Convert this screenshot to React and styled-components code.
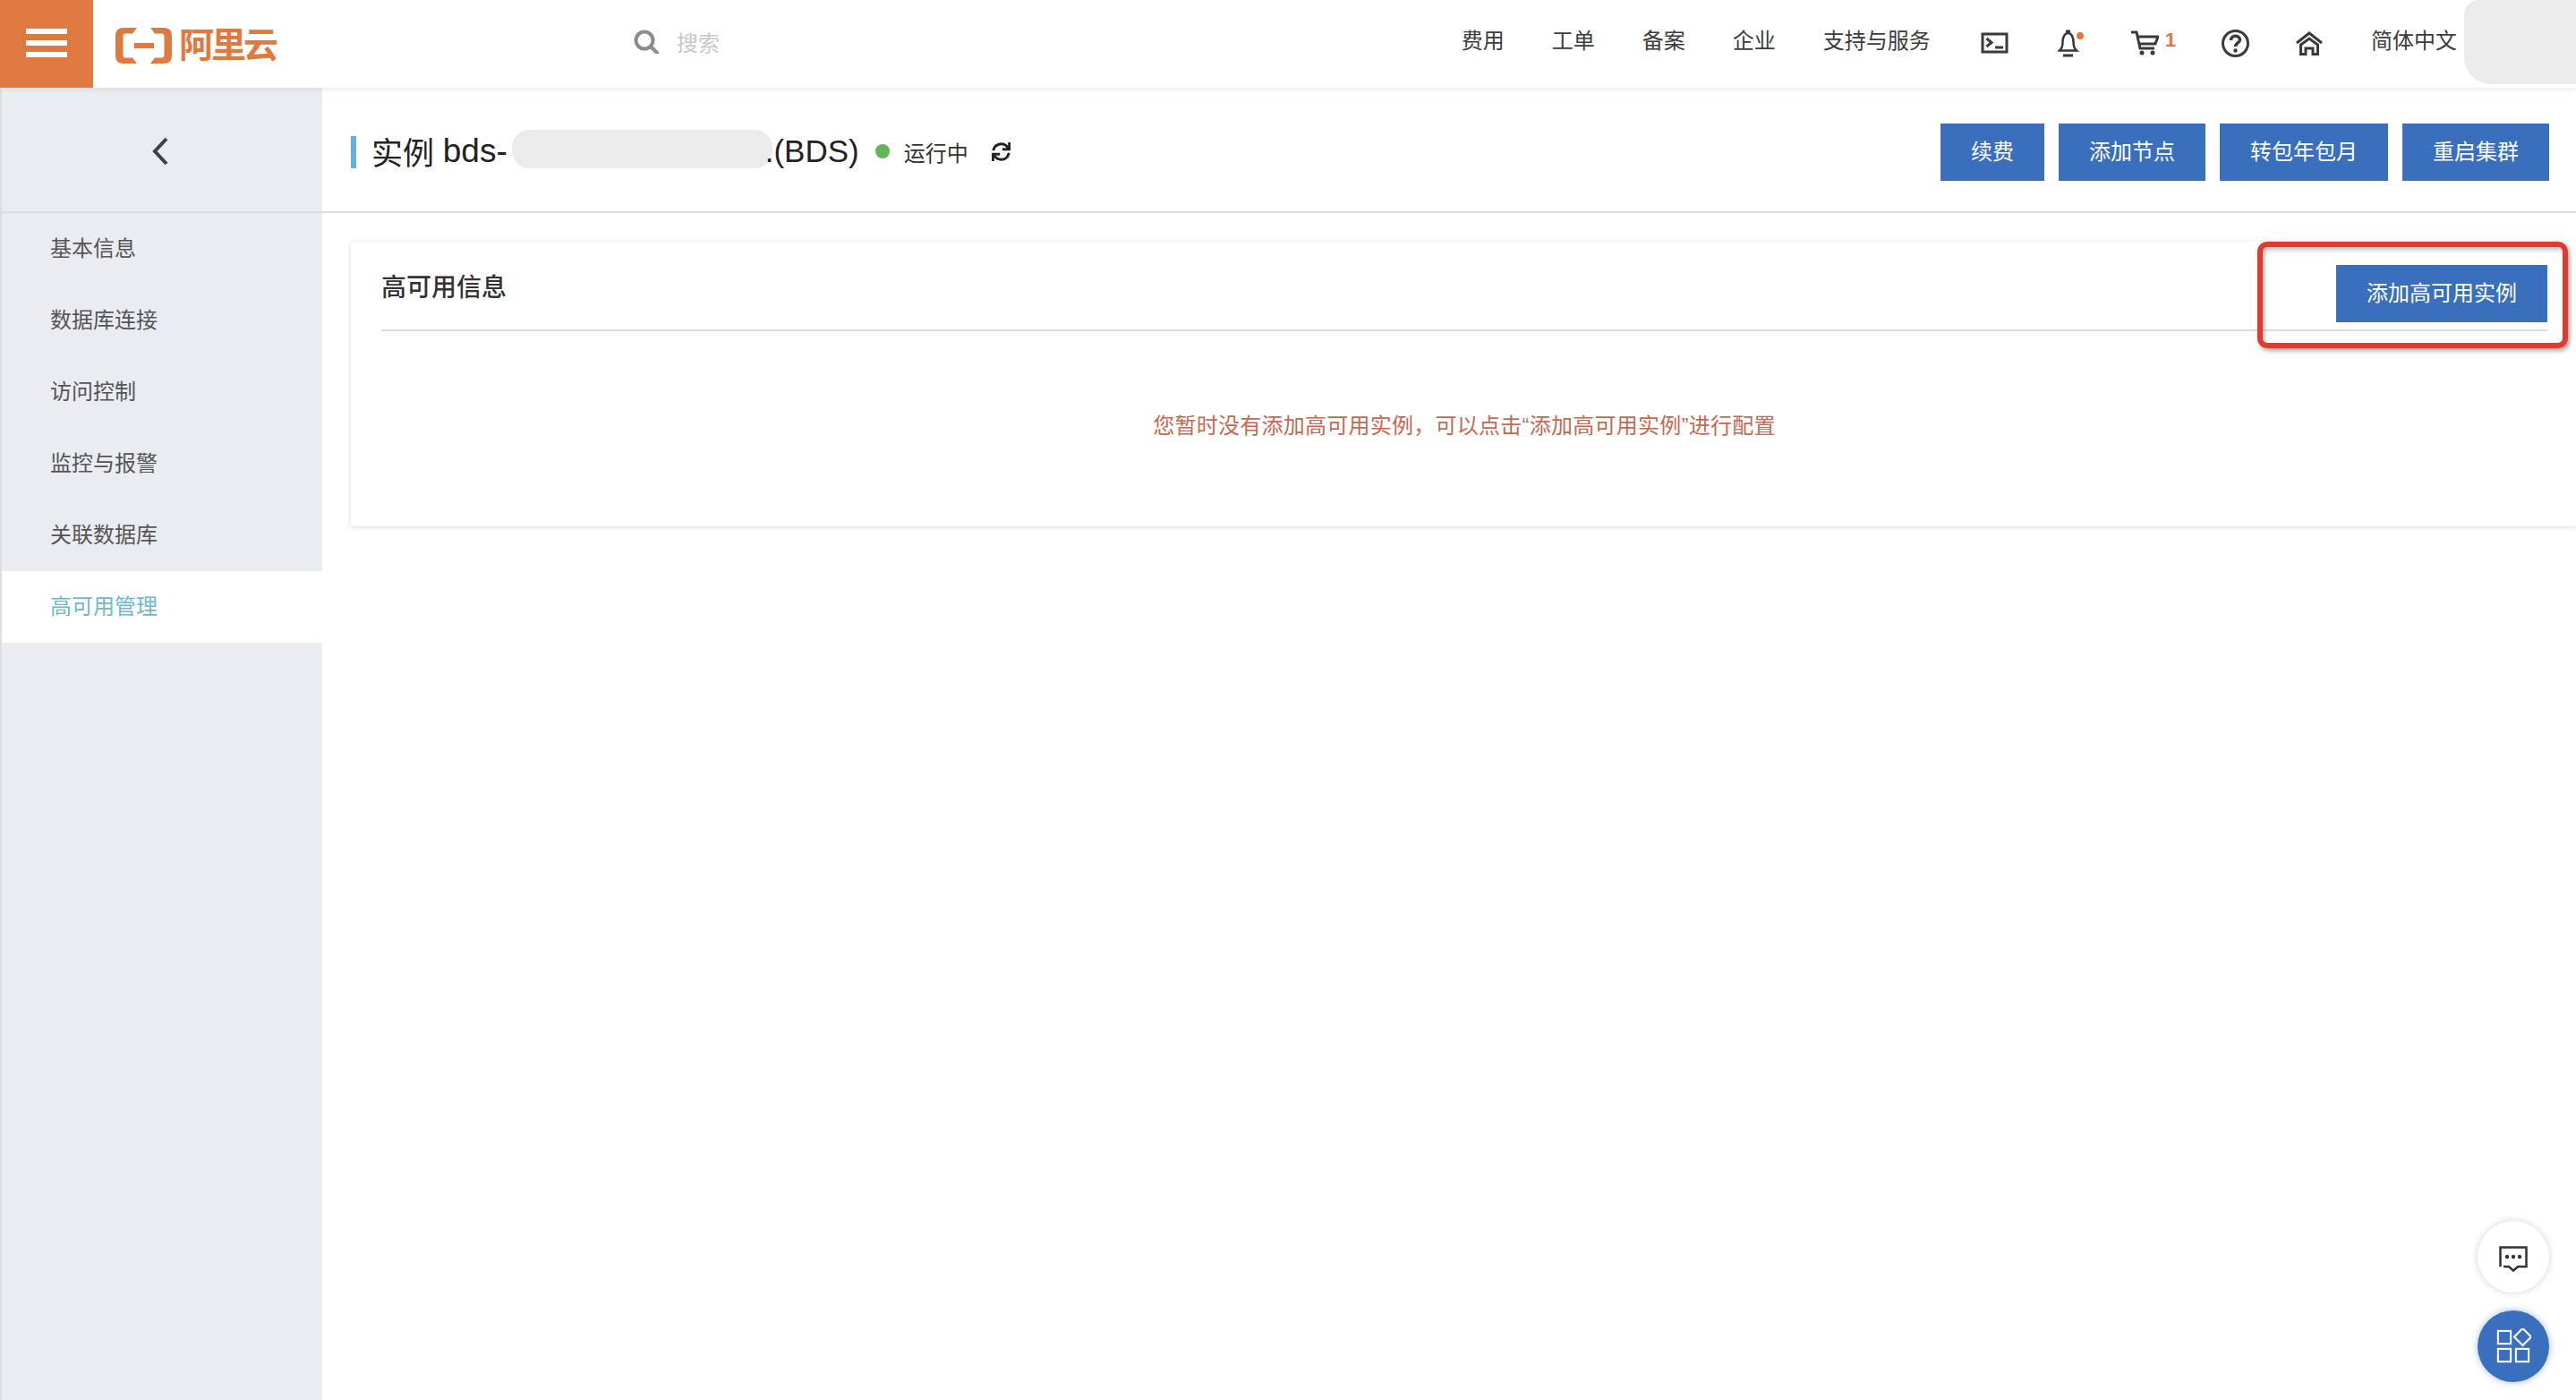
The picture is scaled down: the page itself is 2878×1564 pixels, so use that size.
import { createGlobalStyle, styled } from "styled-components"
import { FaSync } from "react-icons/fa"

const orange = "#e0793f"
const blue = "#3a6fbe"

const GlobalStyle = createGlobalStyle`
    html, body {
        margin: 0;
        height: 100%;
        background: #fff;
    }
    #root {
        height: 100%;
    }
    * {
        box-sizing: border-box;
    }
    body {
        font-family: "Liberation Sans", "Noto Sans CJK SC", sans-serif;
        font-size: 24px;
        color: #333;
    }
`

const navLinks = ["费用", "工单", "备案", "企业", "支持与服务"]
const sideLinks = ["基本信息", "数据库连接", "访问控制", "监控与报警", "关联数据库", "高可用管理"]
const actions = ["续费", "添加节点", "转包年包月", "重启集群"]

export default function App() {
    return (
        <Page>
            <GlobalStyle />
            <Header>
                <MenuButton>
                    <span />
                    <span />
                    <span />
                </MenuButton>
                <Logo>
                    <svg width="63" height="40" viewBox="0 0 63 40" fill={orange}>
                        <path d="M24 0H9Q0 0 0 9V31Q0 40 9 40H24L19 33.500H11Q8.500 33.500 8.500 30V10Q8.500 6.500 11 6.500H19Z" />
                        <path d="M39 0H54Q63 0 63 9V31Q63 40 54 40H39L44 33.500H52Q54.500 33.500 54.500 30V10Q54.500 6.500 52 6.500H44Z" />
                        <rect x="21" y="17" width="22" height="6" />
                    </svg>
                    <LogoText>阿里云</LogoText>
                </Logo>
                <Search>
                    <svg width="28" height="27" viewBox="0 0 28 27" fill="none" stroke="#8c8c8c" strokeWidth="4">
                        <circle cx="12" cy="12" r="9.500" />
                        <path d="M19 19L26 26" strokeLinecap="round" />
                    </svg>
                    <span>搜索</span>
                </Search>
                <Nav>
                    {navLinks.map((link) => (
                        <NavLink key={link}>{link}</NavLink>
                    ))}
                    <IconSlot $left={3}>
                        <svg width="31" height="24" viewBox="0 0 31 24" fill="none" stroke="#3a3a3a" strokeWidth="3">
                            <rect x="2" y="2" width="27" height="20" />
                            <path d="M6.500 7L12 11.500L6.500 16M16 17H25" />
                        </svg>
                    </IconSlot>
                    <IconSlot $left={2}>
                        <svg width="29" height="32" viewBox="0 0 29 32" fill="none" stroke="#3a3a3a" strokeWidth="2.500">
                            <path d="M2 24.500C5 22 5.500 19 5.500 15C5.500 9 8 5 11.500 5C15 5 17.500 9 17.500 15C17.500 19 18 22 21 24.500Z" />
                            <path d="M9 3H14M6 30H17" strokeWidth="3" />
                            <circle cx="25" cy="8" r="4" fill={orange} stroke="none" />
                        </svg>
                    </IconSlot>
                    <IconSlot>
                        <svg width="31" height="28" viewBox="0 0 31 28" fill="none" stroke="#3a3a3a" strokeWidth="3">
                            <path d="M0 2H6L10 20H26M7 7H30L27 15H9" />
                            <circle cx="12" cy="25" r="2.500" fill="#3a3a3a" stroke="none" />
                            <circle cx="24" cy="25" r="2.500" fill="#3a3a3a" stroke="none" />
                        </svg>
                        <CartCount>1</CartCount>
                    </IconSlot>
                    <IconSlot $left={-2}>
                        <svg width="31" height="31" viewBox="0 0 31 31" fill="none" stroke="#3a3a3a" strokeWidth="3">
                            <circle cx="15.500" cy="15.500" r="14" />
                            <path d="M10.500 12C10.500 5.500 20.500 6 20.500 11.500C20.500 15 15.500 15 15.500 19" strokeWidth="3.500" />
                            <circle cx="15.500" cy="23.500" r="2.200" fill="#3a3a3a" stroke="none" />
                        </svg>
                    </IconSlot>
                    <IconSlot $left={-2}>
                        <svg width="32" height="27" viewBox="0 0 32 27" fill="none" stroke="#3a3a3a" strokeWidth="3">
                            <path d="M2 13L16 2L30 13" />
                            <path d="M6.500 25.500V15L16 8L25.500 15V25.500H20V19H12V25.500Z" />
                        </svg>
                    </IconSlot>
                    <NavLink>简体中文</NavLink>
                </Nav>
                <Avatar />
            </Header>
            <Body>
                <Sidebar>
                    <BackRow>
                        <svg width="20" height="32" viewBox="0 0 20 32" fill="none" stroke="#3c4248" strokeWidth="4">
                            <path d="M17 2L4 16L17 30" />
                        </svg>
                    </BackRow>
                    {sideLinks.map((link, i) => (
                        <SideLink key={link} $active={i === sideLinks.length - 1}>
                            {link}
                        </SideLink>
                    ))}
                </Sidebar>
                <Main>
                    <TitleBar>
                        <Title>
                            实例 <InstanceId>bds-</InstanceId><Blur />.(BDS)
                        </Title>
                        <Status>运行中</Status>
                        <RefreshIcon size={21} />
                        <Actions>
                            {actions.map((action) => (
                                <BlueButton key={action}>{action}</BlueButton>
                            ))}
                        </Actions>
                    </TitleBar>
                    <Card>
                        <CardHead>
                            <CardTitle>高可用信息</CardTitle>
                            <BlueButton>添加高可用实例</BlueButton>
                            <Highlight />
                        </CardHead>
                        <Message>您暂时没有添加高可用实例，可以点击“添加高可用实例”进行配置</Message>
                    </Card>
                </Main>
            </Body>
            <FloatStack>
                <FloatButton>
                    <svg width="32" height="29" viewBox="0 0 32 29" fill="none" stroke="#333" strokeWidth="2.500">
                        <path d="M1.500 23V1.500H30.500V23H21L16 27.500L11 23H5" />
                        <circle cx="9" cy="12" r="2.200" fill="#333" stroke="none" />
                        <circle cx="16" cy="12" r="2.200" fill="#333" stroke="none" />
                        <circle cx="23" cy="12" r="2.200" fill="#333" stroke="none" />
                    </svg>
                </FloatButton>
                <FloatButton $primary>
                    <svg width="40" height="40" viewBox="-1 -1 42 42" fill="none" stroke="#fff" strokeWidth="2.200">
                        <rect x="2" y="2" width="15" height="15" />
                        <rect x="2" y="23" width="15" height="15" />
                        <rect x="23" y="23" width="15" height="15" />
                        <path d="M31 -1L41 9L31 19L21 9Z" />
                    </svg>
                </FloatButton>
            </FloatStack>
        </Page>
    )
}

const Page = styled.div`
    position: relative;
    display: flex;
    flex-direction: column;
    height: 100%;
    overflow: hidden;
`

const Header = styled.header`
    position: relative;
    z-index: 2;
    display: flex;
    align-items: center;
    flex: none;
    height: 98px;
    background: #fff;
    box-shadow: 0 2px 6px rgba(0, 0, 0, 0.08);
`

const MenuButton = styled.div`
    display: flex;
    flex-direction: column;
    justify-content: center;
    gap: 7px;
    width: 104px;
    height: 98px;
    padding: 0 29px 2px;
    background: ${orange};
    span {
        display: block;
        height: 6px;
        background: #fff;
    }
`

const Logo = styled.div`
    display: flex;
    align-items: center;
    gap: 8px;
    margin-left: 25px;
    padding-top: 4px;
`

const LogoText = styled.span`
    font-size: 39px;
    line-height: 40px;
    letter-spacing: -3px;
    font-weight: 700;
    color: ${orange};
`

const Search = styled.div`
    display: flex;
    align-items: center;
    gap: 20px;
    margin-left: 400px;
    padding-bottom: 6px;
    color: #c8c8c8;
`

const Nav = styled.nav`
    display: flex;
    align-items: center;
    gap: 53px;
    margin-left: auto;
    padding-bottom: 6px;
`

const NavLink = styled.span`
    line-height: 34px;
    color: #3c3c3c;
    white-space: nowrap;
`

const IconSlot = styled.span`
    display: flex;
    align-items: center;
    margin-left: ${(p) => p.$left || 0}px;
    margin-top: 4px;
`

const CartCount = styled.span`
    margin: -6px 0 0 7px;
    font-size: 22px;
    font-weight: 700;
    color: ${orange};
`

const Avatar = styled.div`
    align-self: flex-start;
    flex: none;
    width: 125px;
    height: 94px;
    margin-left: 8px;
    border-radius: 16px 0 0 30px;
    background: #ebebeb;
`

const Body = styled.div`
    display: flex;
    flex: 1;
    min-height: 0;
`

const Sidebar = styled.aside`
    flex: none;
    width: 360px;
    background: #e9ecf0;
    border-left: 2px solid #dcdee2;
`

const BackRow = styled.div`
    display: flex;
    align-items: center;
    justify-content: center;
    height: 140px;
    padding: 4px 4px 0 0;
    border-bottom: 2px solid #dcdcdc;
`

const SideLink = styled.div`
    height: 80px;
    padding-left: 54px;
    line-height: 80px;
    color: ${(p) => (p.$active ? "#6cb8d2" : "#555")};
    background: ${(p) => (p.$active ? "#fff" : "transparent")};
`

const Main = styled.main`
    flex: 1;
    min-width: 0;
`

const TitleBar = styled.div`
    display: flex;
    align-items: center;
    height: 140px;
    padding: 6px 30px 0 32px;
    border-bottom: 2px solid #dcdcdc;
`

const Title = styled.h1`
    display: flex;
    align-items: center;
    height: 36px;
    margin: 0;
    padding: 0 0 3px 17px;
    border-left: 6px solid #63afe0;
    font-size: 35px;
    font-weight: 400;
    color: #222;
    white-space: pre;
`

const InstanceId = styled.span`
    font-size: 37px;
`

const Blur = styled.span`
    align-self: flex-start;
    width: 291px;
    height: 43px;
    margin: -7px -8px 0 5px;
    border-radius: 20px;
    background: #ebebeb;
`

const Status = styled.span`
    display: flex;
    align-items: center;
    gap: 16px;
    margin: 0 0 2px 18px;
    color: #333;
    &::before {
        content: "";
        width: 16px;
        height: 16px;
        border-radius: 50%;
        background: #64b556;
    }
`

const RefreshIcon = styled(FaSync)`
    margin: 0 0 2px 26px;
    color: #222;
`

const Actions = styled.div`
    display: flex;
    gap: 16px;
    margin-left: auto;
`

const BlueButton = styled.div`
    flex: none;
    height: 64px;
    padding: 0 34px;
    line-height: 64px;
    color: #fff;
    background: ${blue};
`

const Card = styled.section`
    height: 318px;
    margin: 32px 0 0 32px;
    padding: 0 32px 0 34px;
    background: #fff;
    box-shadow: 0 1px 6px rgba(0, 0, 0, 0.14);
`

const CardHead = styled.div`
    position: relative;
    display: flex;
    align-items: flex-start;
    justify-content: space-between;
    height: 100px;
    padding-top: 26px;
    border-bottom: 2px solid #dcdcdc;
`

const CardTitle = styled.h2`
    margin: 2px 0 0;
    font-size: 28px;
    font-weight: 500;
    line-height: 48px;
    color: #333;
`

const Highlight = styled.div`
    position: absolute;
    top: 0;
    right: -23px;
    width: 347px;
    height: 119px;
    border: 6px solid #e5392d;
    border-radius: 11px;
    box-shadow: 2px 3px 5px rgba(0, 0, 0, 0.35), inset 2px 3px 5px rgba(0, 0, 0, 0.25);
`

const Message = styled.p`
    margin: 89px 0 0;
    line-height: 34px;
    letter-spacing: 0.25px;
    text-align: center;
    color: #c9674f;
`

const FloatStack = styled.div`
    position: absolute;
    right: 30px;
    bottom: 20px;
    display: flex;
    flex-direction: column;
    gap: 20px;
`

const FloatButton = styled.div`
    display: flex;
    align-items: center;
    justify-content: center;
    width: 80px;
    height: 80px;
    padding-top: ${(p) => (p.$primary ? 0 : 5)}px;
    border-radius: 50%;
    background: ${(p) => (p.$primary ? blue : "#fff")};
    box-shadow: ${(p) => (p.$primary ? "0 0 8px rgba(58, 111, 190, 0.45)" : "0 0 8px rgba(0, 0, 0, 0.18)")};
`
